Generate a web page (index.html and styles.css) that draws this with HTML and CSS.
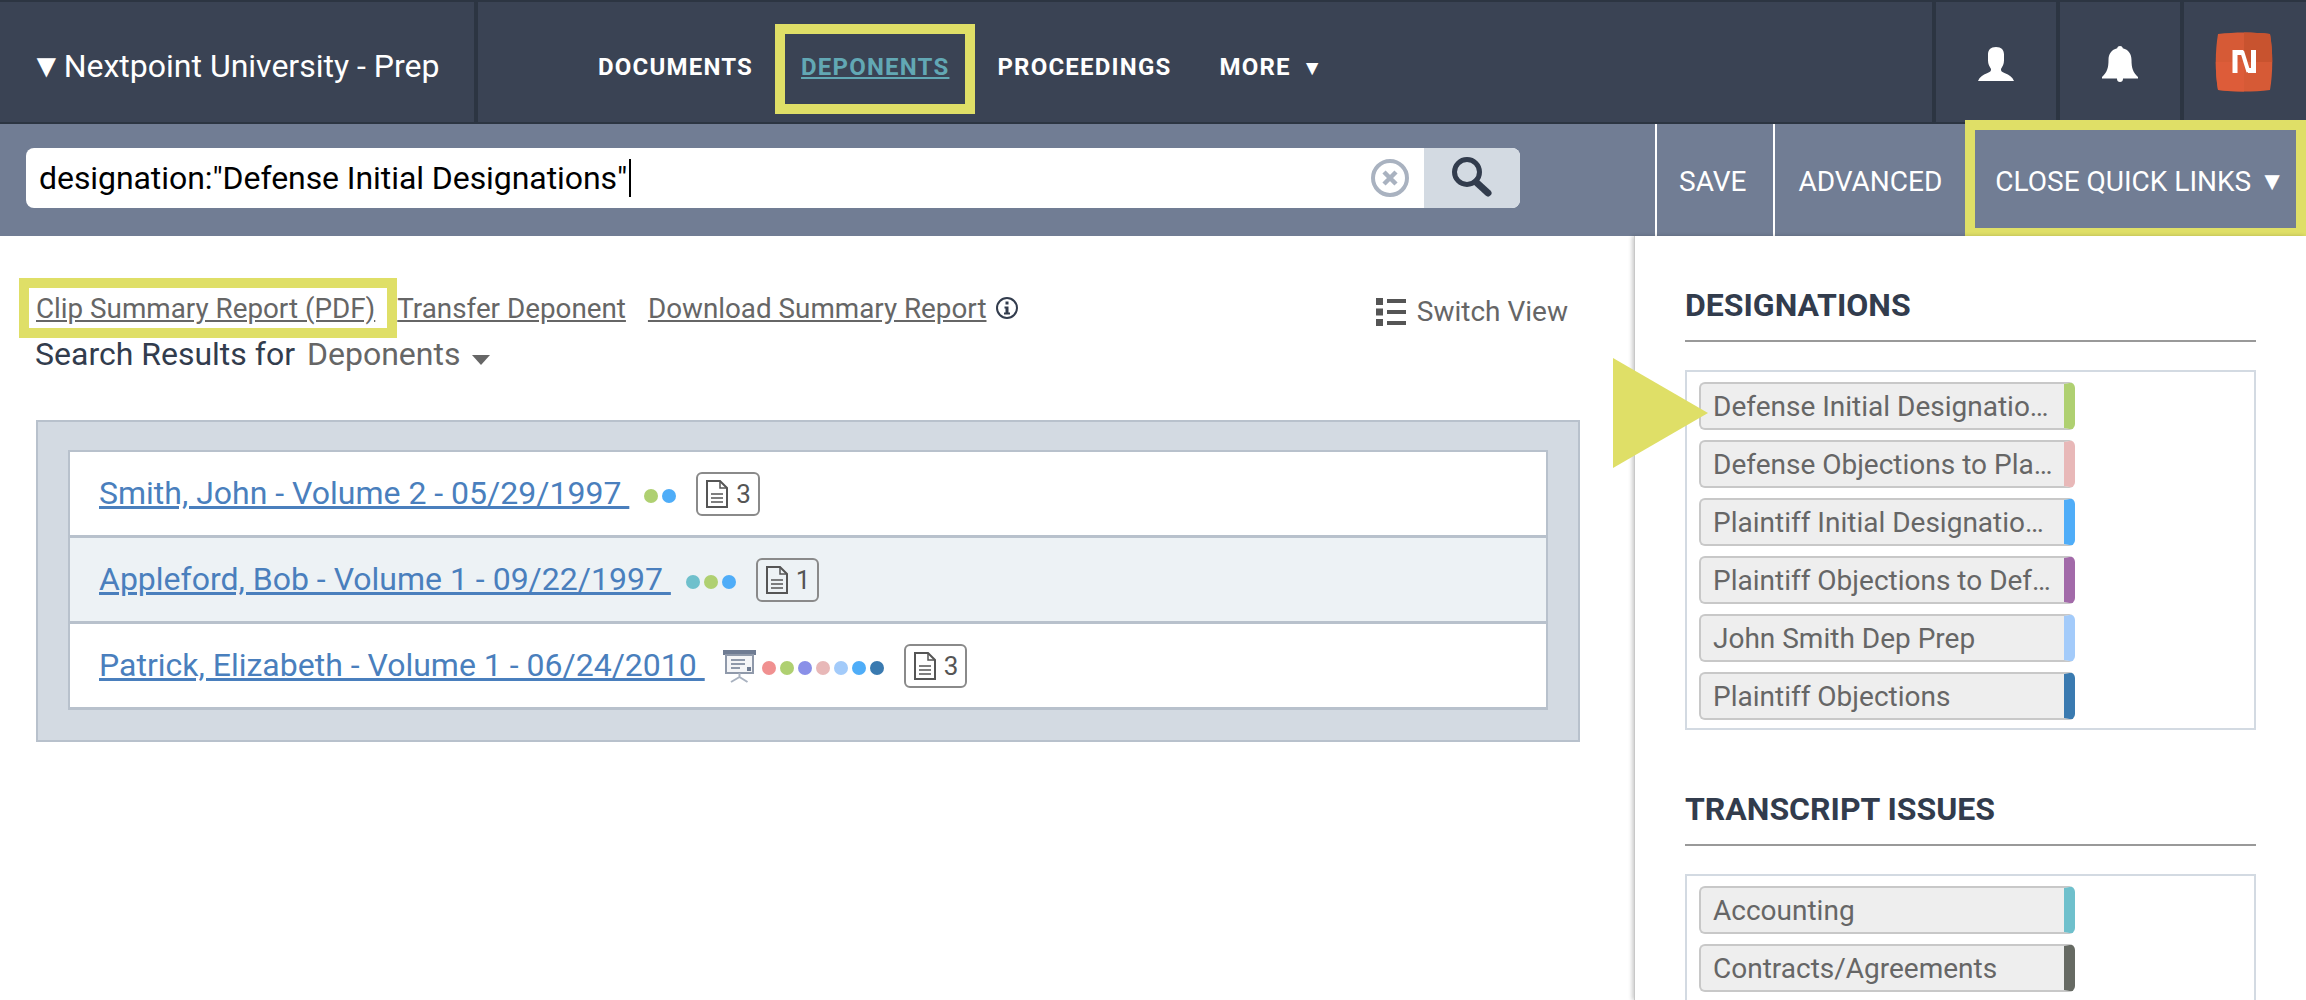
FILE: index.html
```html
<!DOCTYPE html>
<html lang="en">
<head>
    <meta charset="UTF-8">
    <title>Nextpoint University - Prep</title>
    <link rel="stylesheet" href="styles.css">
</head>
<body>
    <!-- Barra principal -->
    <header class="topbar">
        <div class="brand"><span class="brand-caret">▼</span>Nextpoint University - Prep</div>
        <nav class="nav">
            <a class="nav-link" href="#">DOCUMENTS</a>
            <a class="nav-link active" href="#">DEPONENTS</a>
            <a class="nav-link" href="#">PROCEEDINGS</a>
            <a class="nav-link more" href="#">MORE <span class="nav-caret">▼</span></a>
            <span class="callout callout-nav"></span>
        </nav>
        <div class="top-icon">
            <svg class="user-icon" width="36" height="34" viewBox="0 0 36 34"><path fill="#fff" d="M18 0c5.500 0 8 3 8 7.500v6c0 3.500-1.500 6-3 8.500-.3 2 .8 3 4 4.200 4 1.500 7.500 3.800 9 7.800H0c1.500-4 5-6.300 9-7.800 3.200-1.200 4.300-2.200 4-4.200-1.500-2.500-3-5-3-8.500v-6C10 3 12.500 0 18 0z"/></svg>
        </div>
        <div class="top-icon">
            <svg class="bell-icon" width="36" height="36" viewBox="0 0 36 36"><path fill="#fff" d="M18 0c1.500 0 2.500 .8 2.800 2.200C26.500 3.500 29.500 8 29.500 14c0 8 1.500 12.500 6.500 17v1.500H0V31c5-4.500 6.500-9 6.500-17C6.500 8 9.500 3.500 15.200 2.200 15.500 .8 16.500 0 18 0zM15 32.500h6V33c0 2-1.300 3-3 3s-3-1-3-3z"/></svg>
        </div>
        <div class="top-icon logo-cell">
            <svg width="58" height="60" viewBox="0 0 58 60">
                <path fill="#d65a36" d="M3 2C20 0 38 0 55 2 58 20 58 40 55 58 38 60 20 60 3 58 0 40 0 20 3 2z"/>
                <path fill="#c8532f" d="M29 .6C38 .7 47 1.100 55 2 56.500 11 57.200 20 57.200 30H29z"/>
                <path fill="#dd5c39" d="M.8 30H29v29.400C20 59.300 11 58.900 3 58 1.500 49 .8 40 .8 30z"/>
                <path fill="none" stroke="#fff" stroke-width="5" d="M20 41V20.500h8M38.500 18v23M33 38.500h6"/>
                <path fill="none" stroke="#fff" stroke-width="4" d="M27 19l6.500 21"/>
            </svg>
        </div>
    </header>

    <!-- Barra de busca -->
    <div class="searchbar">
        <div class="search-box">
            <div class="search-input">
                <span class="search-text">designation:"Defense Initial Designations"</span><span class="text-cursor"></span>
                <svg class="search-clear" width="38" height="38" viewBox="0 0 38 38"><circle cx="19" cy="19" r="17" fill="none" stroke="#a9b2c0" stroke-width="4"/><path stroke="#a9b2c0" stroke-width="4.500" d="M13 13l12 12M25 13L13 25"/></svg>
            </div>
            <button class="search-button">
                <svg width="44" height="42" viewBox="0 0 44 42"><circle cx="17" cy="16" r="12.500" fill="none" stroke="#323c4d" stroke-width="5"/><path stroke="#323c4d" stroke-width="7" stroke-linecap="round" d="M26 26l12 11"/></svg>
            </button>
        </div>
        <a class="bar-link save-link" href="#">SAVE</a>
        <a class="bar-link" href="#">ADVANCED</a>
        <a class="bar-link close-links" href="#">CLOSE QUICK LINKS <span class="bar-caret">▼</span>
            <span class="callout callout-close"></span>
        </a>
    </div>

    <div class="main">
        <section class="content">
            <div class="report-row">
                <div class="report-links">
                    <a class="report-link" href="#">Clip Summary Report (PDF)<span class="callout callout-clip"></span></a>
                    <a class="report-link" href="#">Transfer Deponent</a>
                    <a class="report-link" href="#">Download Summary Report</a>
                    <svg class="info-icon" width="24" height="24" viewBox="0 0 24 24"><circle cx="12" cy="12" r="10" fill="none" stroke="#323c4d" stroke-width="2"/><path fill="#323c4d" d="M10.500 5.500h3v3h-3zM9.500 10.500h4v6h1.500v2H9v-2h1.500v-4h-1z"/></svg>
                </div>
                <div class="switch-view">
                    <svg width="30" height="28" viewBox="0 0 30 28"><path fill="#555" d="M0 0h7v7H0zM11 1h19v4H11zM0 10.500h7v7H0zM11 12h19v4H11zM0 21h7v7H0zM11 23h19v4H11z"/></svg>
                    Switch View
                </div>
            </div>
            <h1 class="results-title">Search Results for <span class="results-type">Deponents</span><span class="results-caret"></span></h1>

            <div class="results-panel">
                <ul class="results-list">
                    <li class="result">
                        <a href="#">Smith, John - Volume 2 - 05/29/1997&nbsp;</a>
                        <span class="dots">
                            <i class="dot green"></i><i class="dot blue"></i>
                        </span>
                        <span class="doc-badge">
                            <svg width="24" height="30" viewBox="0 0 24 30"><use href="#doc-icon"/></svg>3
                        </span>
                    </li>
                    <li class="result alt">
                        <a href="#">Appleford, Bob - Volume 1 - 09/22/1997&nbsp;</a>
                        <span class="dots">
                            <i class="dot teal"></i><i class="dot green"></i><i class="dot blue"></i>
                        </span>
                        <span class="doc-badge">
                            <svg width="24" height="30" viewBox="0 0 24 30"><use href="#doc-icon"/></svg>1
                        </span>
                    </li>
                    <li class="result">
                        <a href="#">Patrick, Elizabeth - Volume 1 - 06/24/2010&nbsp;</a>
                        <svg class="easel" width="33" height="34" viewBox="0 0 33 34">
                            <path fill="#6f7c93" d="M0 0h33v5H0z"/>
                            <path fill="#f4f5f7" stroke="#8f99aa" stroke-width="2" d="M3 5h27v18H3z"/>
                            <path stroke="#8f99aa" stroke-width="2" d="M8 10h14M8 14h14M8 18h9"/>
                            <path fill="#6f7c93" d="M24 17h4v4h-4z"/>
                            <path fill="none" stroke="#a9b2c0" stroke-width="2" d="M16.500 23v4M16.500 27L8 32M16.500 27l8 5"/>
                        </svg>
                        <span class="dots tight">
                            <i class="dot red"></i><i class="dot green"></i><i class="dot purple"></i><i class="dot pink"></i><i class="dot sky"></i><i class="dot blue"></i><i class="dot navy"></i>
                        </span>
                        <span class="doc-badge">
                            <svg width="24" height="30" viewBox="0 0 24 30"><use href="#doc-icon"/></svg>3
                        </span>
                    </li>
                </ul>
            </div>
        </section>

        <!-- Quick links -->
        <aside class="quick-links">
            <span class="callout-arrow"></span>
            <h2 class="links-title">DESIGNATIONS</h2>
            <div class="tag-box">
                <div class="tag strip-green">Defense Initial Designatio…</div>
                <div class="tag strip-pink">Defense Objections to Pla…</div>
                <div class="tag strip-blue">Plaintiff Initial Designatio…</div>
                <div class="tag strip-violet">Plaintiff Objections to Def…</div>
                <div class="tag strip-sky">John Smith Dep Prep</div>
                <div class="tag strip-navy">Plaintiff Objections</div>
            </div>
            <h2 class="links-title second">TRANSCRIPT ISSUES</h2>
            <div class="tag-box">
                <div class="tag strip-teal">Accounting</div>
                <div class="tag strip-gray">Contracts/Agreements</div>
            </div>
        </aside>
    </div>

    <svg class="icon-defs" width="0" height="0">
        <symbol id="doc-icon" viewBox="0 0 24 30">
            <path fill="none" stroke="#555" stroke-width="2" d="M2 2h13l7 7v19H2z"/>
            <path fill="none" stroke="#555" stroke-width="1.500" d="M15 2v7h7M6 15h12M6 19h12M6 23h12"/>
        </symbol>
    </svg>
</body>
</html>
```

FILE: styles.css
```css
* {
    box-sizing: border-box;
}

html, body {
    height: 1000px;
    overflow: hidden;
}

body {
    margin: 0;
    font-family: Roboto, "Liberation Sans", sans-serif;
    background-color: white;
    color: #323c4d;
}

a {
    color: inherit;
}

/* barra principal */
.topbar {
    display: flex;
    height: 124px;
    background-color: #3a4354;
    border-top: 2px solid #2c3542;
    border-bottom: 2px solid #2c3542;
}

.brand {
    width: 478px;
    padding-left: 30px;
    border-right: 4px solid #2c3542;
    color: white;
    font-size: 32px;
    line-height: 128px;
    white-space: nowrap;
}

.brand-caret {
    margin-right: 1px;
    font-size: 33px;
}

.nav {
    position: relative;
    flex: 1;
    display: flex;
    align-items: center;
    gap: 48px;
    padding-left: 120px;
    padding-top: 9px;
}

.nav-link {
    color: white;
    font-size: 24px;
    font-weight: 700;
    letter-spacing: 1.2px;
    text-decoration: none;
}

.nav-link.active {
    color: #62a8b4;
    text-decoration: underline;
}

.nav-caret {
    margin-left: 4px;
    font-size: 21px;
}

.top-icon {
    width: 124px;
    display: flex;
    align-items: center;
    justify-content: center;
    border-left: 4px solid #2c3542;
}

.user-icon {
    margin-top: 3px;
}

.bell-icon {
    margin-top: 3px;
}

.logo-cell {
    width: 126px;
    padding-right: 2px;
}

/* anotações amarelas */
.callout {
    position: absolute;
    border: 10px solid #dfdf67;
    pointer-events: none;
}

.callout-nav {
    left: 297px;
    top: 22px;
    width: 200px;
    height: 90px;
}

.callout-close {
    left: 0;
    right: 0;
    top: -4px;
    bottom: -2px;
}

.callout-clip {
    left: -17px;
    top: -14px;
    width: 378px;
    height: 60px;
}

.callout-arrow {
    position: absolute;
    left: -22px;
    top: 122px;
    border-left: 95px solid #dfdf67;
    border-top: 55px solid transparent;
    border-bottom: 55px solid transparent;
    z-index: 2;
}

/* barra de busca */
.searchbar {
    display: flex;
    align-items: stretch;
    height: 112px;
    background-color: #717d94;
    padding-left: 26px;
}

.search-box {
    display: flex;
    width: 1494px;
    height: 60px;
    margin-top: 24px;
    margin-right: 135px;
    border-radius: 8px;
    overflow: hidden;
    background-color: white;
}

.search-input {
    flex: 1;
    display: flex;
    align-items: center;
    padding-left: 13px;
    color: black;
    font-size: 32px;
    letter-spacing: -0.07px;
}

.text-cursor {
    width: 2px;
    height: 38px;
    background-color: black;
    margin-left: 2px;
}

.search-clear {
    margin-left: auto;
    margin-right: 15px;
}

.search-button {
    width: 96px;
    padding: 0;
    border: none;
    background-color: #d3dae2;
    cursor: pointer;
}

.bar-link {
    position: relative;
    display: flex;
    align-items: center;
    padding: 2px 23px 0;
    border-left: 2px solid white;
    color: white;
    font-size: 28px;
    text-decoration: none;
    white-space: nowrap;
}

.save-link {
    padding-left: 22px;
    padding-right: 27px;
}

.close-links {
    flex: 1;
    border-left: none;
    padding-left: 30px;
    padding-right: 0;
}

.bar-caret {
    margin-left: 8px;
    font-size: 26px;
}

/* conteúdo */
.main {
    display: flex;
    height: 764px;
}

.content {
    flex: 1;
    padding: 50px 0 0 36px;
}

.report-row {
    display: flex;
    justify-content: space-between;
    align-items: center;
    width: 1532px;
    height: 44px;
}

.report-links {
    display: flex;
    align-items: center;
    gap: 22px;
    color: #666;
    font-size: 27.8px;
}

.report-link {
    position: relative;
    white-space: nowrap;
}

.info-icon {
    margin-left: -14px;
}

.switch-view {
    display: flex;
    align-items: center;
    gap: 11px;
    margin-top: 7px;
    color: #666;
    font-size: 28px;
}

.results-title {
    margin: 4px 0 0 -1px;
    font-size: 32px;
    font-weight: 400;
    line-height: 40px;
}

.results-type {
    margin-left: 4px;
    color: #666;
}

.results-caret {
    display: inline-block;
    margin-left: 12px;
    border-top: 10px solid #666;
    border-left: 9px solid transparent;
    border-right: 9px solid transparent;
}

.results-panel {
    width: 1544px;
    margin-top: 46px;
    padding: 28px 30px 30px 30px;
    background-color: #d3dae2;
    border: 2px solid #b8c1cc;
}

.results-list {
    margin: 0;
    padding: 0;
    list-style: none;
    border: 2px solid #b8c1cc;
    border-bottom: none;
}

.result {
    display: flex;
    align-items: center;
    height: 86px;
    padding-left: 29px;
    background-color: white;
    border-bottom: 3px solid #b8c1cc;
    font-size: 32px;
    color: #4a7fbd;
}

.result a {
    margin-top: -2px;
}

.result.alt {
    background-color: #edf2f5;
}

.dots {
    display: flex;
    gap: 4px;
    margin-left: 15px;
    margin-top: 4px;
}

.dots.tight {
    margin-left: 6px;
}

.dot {
    width: 14px;
    height: 14px;
    border-radius: 50%;
}

.green { background-color: #afd071; }
.blue { background-color: #4fadf8; }
.teal { background-color: #6fc0cc; }
.red { background-color: #f09090; }
.purple { background-color: #8a90e8; }
.pink { background-color: #e8b8b8; }
.sky { background-color: #a3cbfa; }
.navy { background-color: #3a7ab0; }

.easel {
    margin-left: 18px;
    margin-top: 2px;
}

.doc-badge {
    display: flex;
    align-items: center;
    gap: 7px;
    height: 44px;
    margin-left: 20px;
    padding: 0 7px;
    border: 2px solid #8a8a8a;
    border-radius: 6px;
    color: #555;
    font-size: 26px;
}

.icon-defs {
    position: absolute;
}

/* painel lateral */
.quick-links {
    position: relative;
    width: 672px;
    padding: 50px 50px 0 50px;
    background-color: white;
    border-left: 1px solid #c8c8c8;
    box-shadow: -2px 0 4px rgba(0, 0, 0, 0.2);
}

.links-title {
    margin: 0;
    padding-bottom: 16px;
    border-bottom: 2px solid #999;
    font-size: 32px;
    font-weight: 700;
    line-height: 38px;
}

.links-title.second {
    margin-top: 60px;
}

.tag-box {
    margin-top: 28px;
    padding: 10px 12px 8px;
    border: 2px solid #d3dae2;
}

.tag {
    display: flex;
    align-items: center;
    width: 376px;
    height: 48px;
    padding-left: 12px;
    background-color: #eee;
    border: 2px solid #c8c8c8;
    border-right-width: 11px;
    border-radius: 6px;
    color: #666;
    font-size: 28px;
    white-space: nowrap;
}

.tag + .tag {
    margin-top: 10px;
}

.strip-green { border-right-color: #afd071; }
.strip-pink { border-right-color: #e8b8b8; }
.strip-blue { border-right-color: #4fadf8; }
.strip-violet { border-right-color: #a26aa9; }
.strip-sky { border-right-color: #a3cbfa; }
.strip-navy { border-right-color: #3a7ab0; }
.strip-teal { border-right-color: #6fc0cc; }
.strip-gray { border-right-color: #666a63; }
```
